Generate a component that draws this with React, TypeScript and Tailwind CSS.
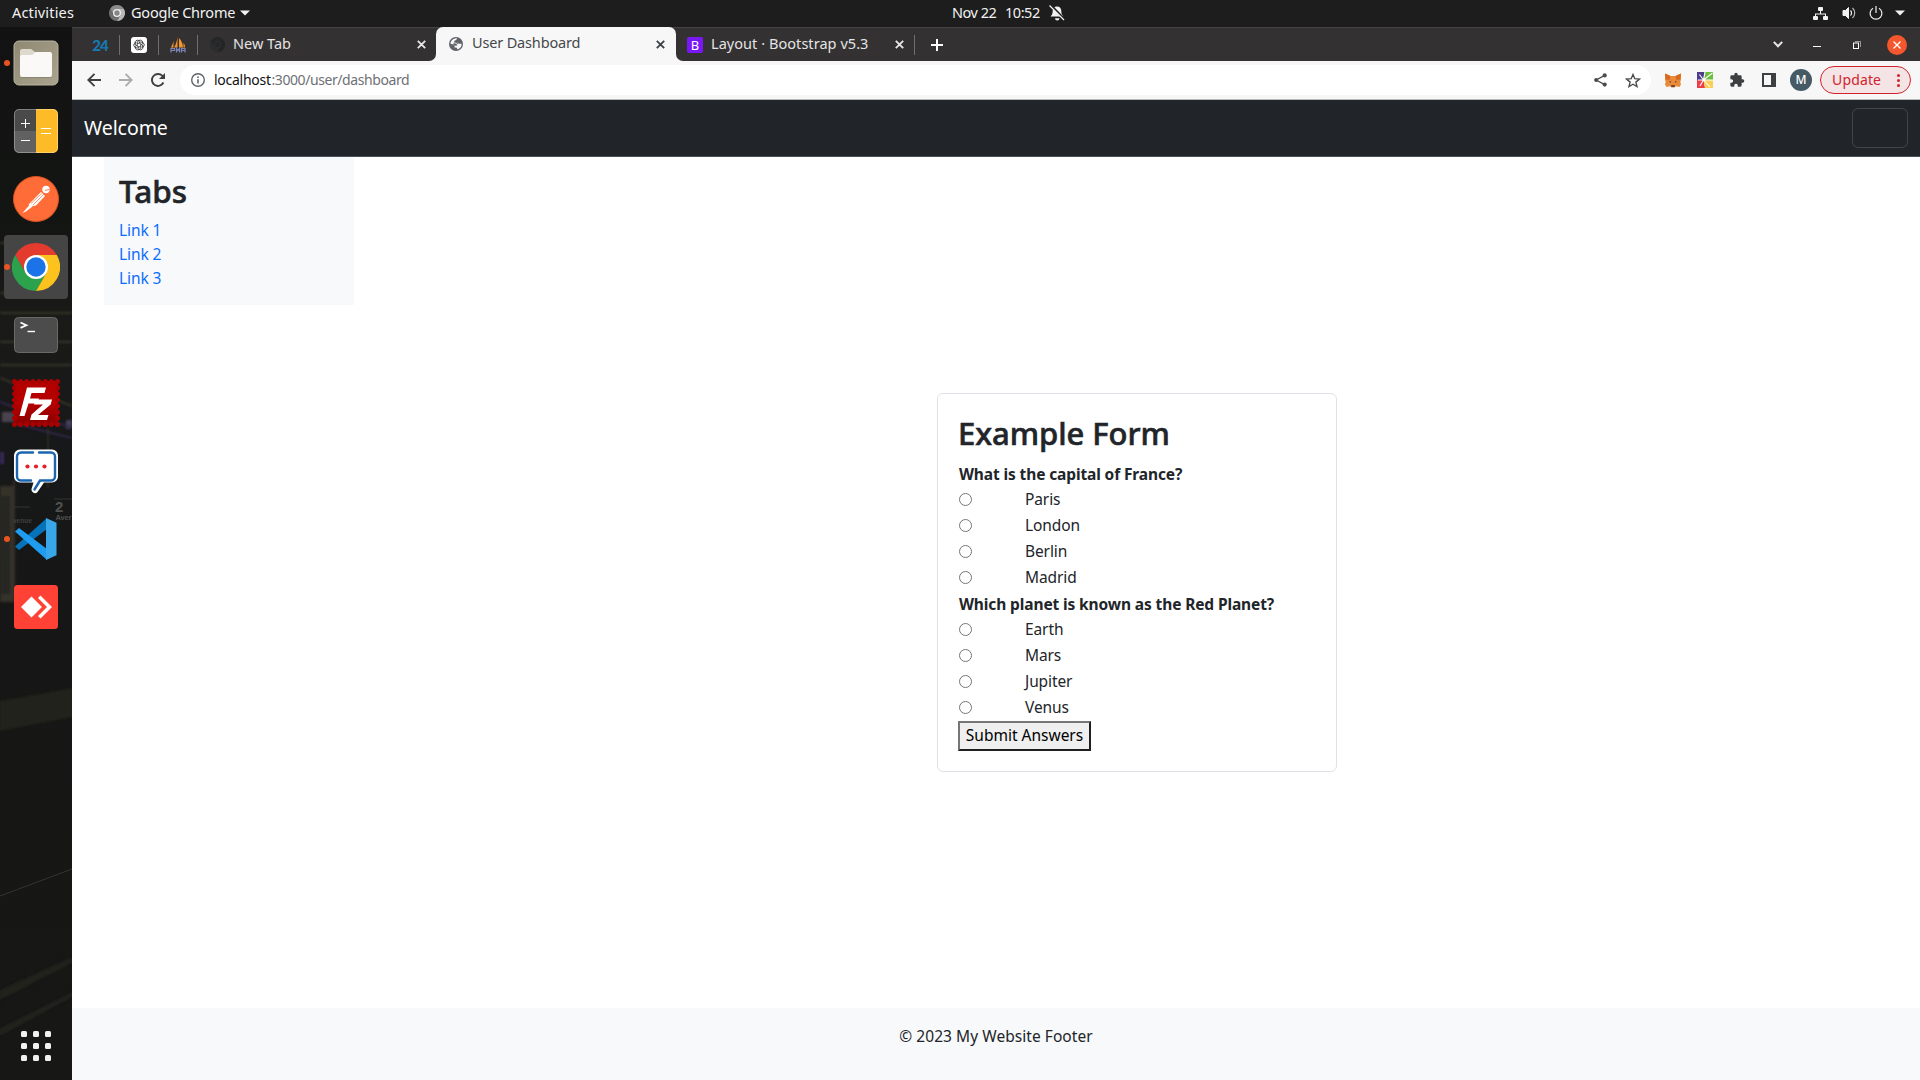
import type { ReactNode } from "react";

/* ---------- dock icons ---------- */

const FilesIcon = () => (
  <svg width="46" height="46" viewBox="0 0 46 46">
    <defs>
      <linearGradient id="files" x1="0" y1="0" x2="1" y2="1">
        <stop offset="0" stopColor="#8f8872" />
        <stop offset="1" stopColor="#aaa38d" />
      </linearGradient>
    </defs>
    <rect x="1" y="1" width="44" height="44" rx="5" fill="url(#files)" stroke="#b9b3a1" />
    <path d="M7 15V11a2 2 0 0 1 2-2h9l4 3h9v8H7z" fill="#ddd9cc" />
    <path d="M7 17a2 2 0 0 1 2-2h10l4-3h14a2 2 0 0 1 2 2v21a2 2 0 0 1-2 2H9a2 2 0 0 1-2-2z" fill="#faf9f7" />
    <path d="M8 37.5h30" stroke="#7d7765" strokeOpacity=".6" />
  </svg>
);

const CalculatorIcon = () => (
  <svg width="46" height="46" viewBox="0 0 46 46">
    <defs>
      <clipPath id="calc">
        <rect x="1" y="1" width="44" height="44" rx="5" />
      </clipPath>
    </defs>
    <g clipPath="url(#calc)">
      <rect width="23" height="23" fill="#4a4a4a" />
      <rect y="23" width="23" height="23" fill="#616161" />
      <rect x="23" width="23" height="46" fill="#fdbc27" />
    </g>
    <rect x="1.5" y="1.5" width="43" height="43" rx="4.5" fill="none" stroke="#fff" strokeOpacity=".3" />
    <path d="M8 15.500h9M12.500 11v9M8 32.500h9M28 20.500h10M28 25.500h10" stroke="#fff" strokeWidth="1" />
  </svg>
);

const PostmanIcon = () => (
  <svg width="46" height="46" viewBox="0 0 46 46">
    <circle cx="23" cy="23" r="22.500" fill="#ff6c37" stroke="#d9531f" />
    <circle cx="33" cy="13.500" r="3.700" fill="#fff" />
    <path d="M32 14.500l4.500-1.200" stroke="#ff6c37" strokeWidth=".9" />
    <path d="M28 16l4 4-9 9.500-5.500 1-2-2z" fill="#fff" />
    <path d="M16.500 29l3 1.500-6.500 5-3.500 1.500z" fill="#fff" />
    <path d="M20 29l10.500-10.500M18 27.500l10.500-10" stroke="#ff6c37" strokeWidth=".7" />
  </svg>
);

const ChromeIcon = ({ size = 48, grey = false, dark = false }: { size?: number; grey?: boolean; dark?: boolean }) => {
  const c = dark
    ? ["#242628", "#2a2c2e", "#222426", "#343133", "#25282a"]
    : grey
      ? ["#8c8c8c", "#6f6f6f", "#b8b8b8", "#f0f0f0", "#858585"]
      : ["#e33b2e", "#2da24c", "#fcc31e", "#ffffff", "#1a73e8"];
  return (
    <svg width={size} height={size} viewBox="0 0 48 48">
      <path d="M24 12H44.800A24 24 0 0 0 3.215 12L13.600 30z" fill={c[0]} />
      <path d="M34.400 30L24 48A24 24 0 0 1 3.215 12L13.600 30z" fill={c[1]} />
      <path d="M24 12H44.785A24 24 0 0 1 24 48L34.400 30z" fill={c[2]} />
      <circle cx="24" cy="24" r="12" fill={c[3]} />
      <circle cx="24" cy="24" r={grey ? 8 : 9.7} fill={c[4]} />
    </svg>
  );
};

const TerminalIcon = () => (
  <svg width="46" height="38" viewBox="0 0 46 38">
    <rect x="1.500" y="1.500" width="43" height="35" rx="4" fill="#4c4c4c" stroke="#6a6a6a" />
    <path d="M7.500 6.500l6 2.700-6 2.700" fill="none" stroke="#fff" strokeWidth="1.700" />
    <path d="M14.500 15.500h7.500" stroke="#fff" strokeWidth="1.400" />
  </svg>
);

const FilezillaIcon = () => (
  <svg width="48" height="48" viewBox="0 0 48 48">
    <defs>
      <linearGradient id="fz" x1="0" y1="0" x2="0" y2="1">
        <stop offset="0" stopColor="#b30000" />
        <stop offset=".5" stopColor="#b80000" />
        <stop offset="1" stopColor="#880000" />
      </linearGradient>
    </defs>
    <rect x="2" y="2" width="44" height="44" fill="url(#fz)" />
    <rect x="2.500" y="2.500" width="43" height="43" fill="none" stroke="#ac0000" strokeWidth="5" strokeLinecap="round" strokeDasharray="0 6.143" />
    <path d="M15 8.500h19l-1.500 5.500H19.500l-1.500 5.500h9l-1.300 5H16.500L12.500 37H7.500z" fill="#fff" />
    <path d="M23.500 20.500H40l-1.300 5L26 36h10.500l-1.500 5H18l1.500-5.500L31 25.500h-9z" fill="#fff" />
  </svg>
);

const ChatIcon = () => (
  <svg width="48" height="48" viewBox="0 0 48 48">
    <path
      d="M8 2.500h32a6 6 0 0 1 6 6v21a6 6 0 0 1-6 6h-8l-6.500 9.500a3.500 3.500 0 0 1-6-3l2-6.500H8a6 6 0 0 1-6-6v-21a6 6 0 0 1 6-6z"
      fill="#fff"
    />
    <path
      d="M21 5.500H9a4 4 0 0 0-4 4v20a4 4 0 0 0 4 4h10M27 5.500h12a4 4 0 0 1 4 4v20a4 4 0 0 1-4 4H28l-5.500 9"
      fill="none"
      stroke="#1c66b0"
      strokeWidth="2.400"
      strokeLinecap="round"
    />
    <g fill="#e5202b">
      <circle cx="15.500" cy="19.500" r="2.100" />
      <circle cx="24" cy="19.500" r="2.100" />
      <circle cx="32.500" cy="19.500" r="2.100" />
    </g>
  </svg>
);

const CodeIcon = () => (
  <svg width="44" height="44" viewBox="0 0 44 44">
    <path d="M1 29.500l4 3.600L33 12V1z" fill="#0673b8" />
    <path d="M1 14.500l4-3.600L33 32v11z" fill="#1f9cf0" />
    <path d="M32 1l10.500 4.800v32.400L32 43z" fill="#3aa6ea" />
  </svg>
);

const AnydeskIcon = () => (
  <svg width="44" height="44" viewBox="0 0 44 44">
    <rect width="44" height="44" rx="3.500" fill="#ff4136" />
    <path d="M17.500 11.500L28 22 17.500 32.500 7 22z" fill="#fff" />
    <path d="M24 13l2.500-2.500L38 22 26.500 33.500 24 31l9-9z" fill="#fff" />
  </svg>
);

const DockBackdrop = () => (
  <svg className="absolute inset-0" width="72" height="1053" viewBox="0 27 72 1053">
    <defs>
      <linearGradient id="dock" x1="0" y1="0" x2="0" y2="1">
        <stop offset="0" stopColor="#121212" />
        <stop offset=".18" stopColor="#131513" />
        <stop offset=".28" stopColor="#1a1a18" />
        <stop offset=".4" stopColor="#171819" />
        <stop offset=".56" stopColor="#161616" />
        <stop offset="1" stopColor="#171815" />
      </linearGradient>
      <filter id="soft">
        <feGaussianBlur stdDeviation="1.200" />
      </filter>
    </defs>
    <rect y="27" width="72" height="1053" fill="url(#dock)" />
    <g filter="url(#soft)">
      <path d="M0 243h30M0 293h32M0 313h72M0 342h72M0 365h72M0 378l72 28" stroke="#333225" strokeWidth="2" fill="none" />
      <rect x="2" y="412" width="14" height="10" fill="#48434f" />
      <rect x="66" y="420" width="6" height="9" fill="#45405a" />
      <path d="M0 402l72 26M16 424l56 14" stroke="#302849" strokeWidth="2" />
      <rect y="452" width="4" height="12" fill="#392c58" />
      <rect y="486" width="14" height="116" fill="#34322b" />
      <rect x="1" y="496" width="9" height="98" fill="#262624" />
      <path d="M14 480v120" stroke="#3b372c" strokeWidth="1.500" />
      <path d="M48 428v60" stroke="#33302a" strokeWidth="1.500" />
      <path d="M0 701l40-7 32-6v29L0 731z" fill="#24201a" />
      <path d="M0 990l72-33v6L0 1000zM0 1028l72-36v5L0 1036z" fill="#22231d" />
    </g>
    <path d="M0 896l72-27" stroke="#3b3b38" strokeWidth=".8" />
    <path d="M54 499h18M14 507h16" stroke="#3a3a3a" strokeWidth=".8" />
    <g fill="#505050" fontFamily="Liberation Sans, sans-serif" fontWeight="700">
      <text x="55" y="512" fontSize="15">2</text>
      <text x="55.500" y="520" fontSize="7.500" textLength="16">Aver</text>
      <text x="13" y="523" fontSize="6.500" fill="#404040">venue</text>
    </g>
  </svg>
);

const dockItems: { id: string; icon: ReactNode; running?: boolean; active?: boolean }[] = [
  { id: "files", icon: <FilesIcon />, running: true },
  { id: "calculator", icon: <CalculatorIcon /> },
  { id: "postman", icon: <PostmanIcon /> },
  { id: "chrome", icon: <ChromeIcon />, running: true, active: true },
  { id: "terminal", icon: <TerminalIcon /> },
  { id: "filezilla", icon: <FilezillaIcon /> },
  { id: "chat", icon: <ChatIcon /> },
  { id: "code", icon: <CodeIcon />, running: true },
  { id: "anydesk", icon: <AnydeskIcon /> },
];

function Dock() {
  return (
    <aside className="relative flex w-[72px] shrink-0 flex-col overflow-hidden bg-[#151515]">
      <DockBackdrop />
      <div className="relative flex flex-col pt-[2px]">
        {dockItems.map((item) => (
          <div key={item.id} className="relative flex h-[68px] items-center justify-center">
            <div
              className={
                item.active
                  ? "flex size-16 items-center justify-center rounded-[4px] bg-[#454545]"
                  : "flex size-16 items-center justify-center"
              }
            >
              {item.icon}
            </div>
            {item.running && <span className="absolute left-1 size-[6px] rounded-full bg-[#e95420]" />}
          </div>
        ))}
      </div>
      <div className="relative mx-auto mt-auto mb-[19px] grid grid-cols-3 gap-[6px]">
        {Array.from({ length: 9 }, (_, i) => (
          <span key={i} className="size-[6px] rounded-[1.5px] bg-[#f2f1ef]" />
        ))}
      </div>
    </aside>
  );
}

/* ---------- system bar ---------- */

const Caret = () => (
  <svg width="10" height="6" viewBox="0 0 10 6">
    <path d="M0 .5h10L5 5.500z" fill="#f2f2f2" />
  </svg>
);

function SystemBar() {
  return (
    <header className="flex h-[27px] shrink-0 items-center bg-[#1d1d1d] pb-px text-[#f2f2f2]">
      <div className="flex w-[952px] items-center pl-3 text-[14.5px]">
        <span className="w-[97px] tracking-[0.16px]">Activities</span>
        <ChromeIcon size={16} grey />
        <span className="ml-[6px] w-[105px] whitespace-nowrap tracking-[-0.22px]">Google Chrome</span>
        <span className="ml-[4px]">
          <Caret />
        </span>
      </div>
      <span className="w-[53px] whitespace-nowrap text-[14.5px] tracking-[-0.5px]">Nov 22</span>
      <span className="w-[44px] whitespace-nowrap text-[14.5px] tracking-[-0.45px]">10:52</span>
      <svg width="16" height="16" viewBox="0 0 16 16">
        <path d="M8 1.500c2.800 0 4.300 2 4.300 4.600 0 3 1 4.400 2.200 5.400H1.500c1.200-1 2.200-2.400 2.200-5.400C3.700 3.500 5.200 1.500 8 1.500z" fill="#f2f2f2" />
        <path d="M6 13.200h4.500a2.200 2.200 0 0 1-4.500 0z" fill="#f2f2f2" />
        <path d="M1.500 0L16 15" stroke="#1d1d1d" strokeWidth="2.500" />
        <path d="M.5.500L15 15" stroke="#f2f2f2" strokeWidth="1.300" />
      </svg>
      <div className="ml-auto flex items-center pr-[15px]">
        <svg width="15" height="13" viewBox="0 0 15 13" fill="#f2f2f2">
          <rect x="5" width="5" height="4" rx="1" />
          <rect y="9" width="5" height="4" rx="1" />
          <rect x="10" y="9" width="5" height="4" rx="1" />
          <path d="M7 4h1v2.500h5V9h-1V7.500H3V9H2V6.500h5z" />
        </svg>
        <svg className="ml-[14px]" width="16" height="14" viewBox="0 0 16 14" fill="none" stroke="#f2f2f2">
          <path d="M1 4.500h2.500L6.500 1.500v11l-3-3H1z" fill="#f2f2f2" />
          <path d="M8.500 4.500a3.500 3.500 0 0 1 0 5" strokeWidth="1.200" />
          <path d="M10.500 2a6.800 6.800 0 0 1 0 10" strokeWidth="1.200" strokeOpacity=".75" />
        </svg>
        <svg className="ml-[11px]" width="14" height="14" viewBox="0 0 14 14" fill="none" stroke="#f2f2f2" strokeWidth="1.200">
          <path d="M4 2.200a5.900 5.900 0 1 0 6 0M7 0v7" />
        </svg>
        <span className="ml-3">
          <Caret />
        </span>
      </div>
    </header>
  );
}

/* ---------- browser chrome ---------- */

const CloseX = ({ className }: { className: string }) => (
  <svg className={className} width="9" height="9" viewBox="0 0 9 9">
    <path d="M.8.8l7.400 7.400M8.200.8L.8 8.200" stroke="currentColor" strokeWidth="1.800" />
  </svg>
);

const TabRule = () => <span className="h-5 w-px shrink-0 bg-[#6f6d6e]" />;

const OpenAiIcon = () => (
  <svg width="16" height="16" viewBox="0 0 16 16">
    <rect width="16" height="16" rx="3" fill="#fff" />
    <g fill="none" stroke="#222" strokeWidth=".75">
      {[0, 60, 120, 180, 240, 300].map((a) => (
        <path key={a} d="M6.200 9V4.800L8 3.500a2.400 2.400 0 0 1 3.700 1.800V7" transform={`rotate(${a} 8 8)`} />
      ))}
    </g>
  </svg>
);

const SailIcon = () => (
  <svg width="16" height="16" viewBox="0 0 16 16">
    <path d="M7.500 0v10.500H4.200C6 7 7 4 7.500 0zM9 1c2.500 2.500 4 6 4 9.500H9zM3.500 3.500v7H.8C2.300 8 3.200 6 3.500 3.500zM13.500 5.500c1 1.500 1.500 3 1.500 5h-1.500z" fill="#f5952a" />
    <path d="M1 15.500V11.500h3.500v2H1M6.500 15.500v-4l1.500 2 1.500-2v4M11.500 15.500v-4H15v4M11.500 13.500H15" fill="none" stroke="#7d86b8" strokeWidth="1.200" />
  </svg>
);

const GlobeIcon = () => (
  <svg width="14" height="14" viewBox="0 0 14 14">
    <circle cx="7" cy="7" r="7" fill="#5f6368" />
    <path
      d="M8 1.300c-.3 1.200-.6 1.900-1.800 2.100-1 .2-1 .9-1.100 1.600h3l1.200 1.600c1 .1 1.600.3 3.300.2A5.600 5.600 0 0 1 8.500 12.400c-.5-1-.2-1.600-1.400-2H5.600V8.800L4.200 7.500 1.500 6.700C1.700 3.500 4.500 1.300 8 1.300z"
      fill="#f7f7f7"
    />
    <path d="M5.100 5h3l.9 1.600-.9 1.900-2.500.2-1.400-1.200z" fill="#5f6368" />
    <path d="M5.200 5.800c1.600.3 3 .5 3.400 2.200" fill="none" stroke="#f7f7f7" strokeWidth=".9" />
  </svg>
);

function TabStrip() {
  return (
    <div className="flex h-[34px] shrink-0 items-center border-t border-[#454344] bg-[#343132] text-[14.5px] text-[#e4e4e4]">
      <span className="flex w-[47px] justify-center pr-[-1px] pl-[9px] font-['Lato',sans-serif] text-[15px] leading-[20px] font-black tracking-[-1px] text-[#1479b3]">
        24
      </span>
      <TabRule />
      <span className="mx-[11px]">
        <OpenAiIcon />
      </span>
      <TabRule />
      <span className="mx-[11px]">
        <SailIcon />
      </span>
      <TabRule />
      <span className="ml-3">
        <ChromeIcon size={15} dark />
      </span>
      <span className="ml-2 w-[184px] pb-[2px]">New Tab</span>
      <CloseX className="text-[#e8e8e8]" />
      <div className="relative ml-[10px] flex h-[34px] w-[240px] shrink-0 items-center self-end rounded-t-[7px] bg-[#f7f7f7] text-[#45474a]">
        <svg className="absolute bottom-0 -left-[7px]" width="7" height="7" viewBox="0 0 7 7">
          <path d="M7 0v7H0a7 7 0 0 0 7-7z" fill="#f7f7f7" />
        </svg>
        <svg className="absolute -right-[7px] bottom-0" width="7" height="7" viewBox="0 0 7 7">
          <path d="M0 0v7h7a7 7 0 0 1-7-7z" fill="#f7f7f7" />
        </svg>
        <span className="ml-[13px]">
          <GlobeIcon />
        </span>
        <span className="ml-[9px] w-[184px] pb-[2px] whitespace-nowrap tracking-[-0.16px]">User Dashboard</span>
        <CloseX className="text-[#3c4043]" />
      </div>
      <span className="ml-[11px] flex size-4 items-center justify-center rounded-[2px] bg-[#7a18f5] text-[13px] leading-4 text-white">B</span>
      <span className="ml-2 w-[184px] pb-[2px] whitespace-nowrap tracking-[0.05px]">Layout · Bootstrap v5.3</span>
      <CloseX className="text-[#e8e8e8]" />
      <span className="ml-[10px] h-5 w-px bg-[#6f6d6e]" />
      <svg className="ml-4" width="12" height="12" viewBox="0 0 12 12">
        <path d="M6 0v12M0 6h12" stroke="#fff" strokeWidth="2" />
      </svg>
      <svg className="ml-auto" width="10" height="7" viewBox="0 0 10 7">
        <path d="M.8.900L5 5.200 9.200.900" fill="none" stroke="#e8e8e8" strokeWidth="2" />
      </svg>
      <span className="mt-[4px] ml-[30px] h-px w-2 bg-white" />
      <svg className="ml-8" width="8" height="8" viewBox="0 0 8 8">
        <rect x=".5" y="2" width="5" height="5.500" fill="none" stroke="#fff" />
        <path d="M2 .5h5.500V6" fill="none" stroke="#999" />
      </svg>
      <span className="mr-[13px] ml-[26px] flex size-5 items-center justify-center rounded-full bg-[#f4562e]">
        <svg width="8" height="8" viewBox="0 0 8 8">
          <path d="M.5.500l7 7M7.500.500l-7 7" stroke="#fff" strokeWidth="1.300" />
        </svg>
      </span>
    </div>
  );
}

const FoxIcon = () => (
  <svg width="16" height="15" viewBox="0 0 16 15">
    <path d="M0 .5L5.500 3h5L16 .5v6L15.300 9l.7 2.500-1.500 2.500-3.500-.8-1.500 1.300h-3L5 13.200 1.500 14 0 11.500.7 9 0 6.500z" fill="#e88a3a" />
    <path d="M0 .5L5.500 3 4.500 7 .8 6.500zM16 .5L10.500 3l1 4 3.700-.5z" fill="#d8691c" />
    <path d="M5.500 3h5L9.500 11h-3z" fill="#f0883a" />
    <path d="M4 8l2.300.8-.8.900zM12 8l-2.300.8.8.900zM6.300 12.200h3.400l.2 1.600H6.100z" fill="#3a3433" />
  </svg>
);

const PinwheelIcon = () => (
  <svg width="16" height="16" viewBox="0 0 16 16">
    <path d="M0 0h8L6.500 8H0z" fill="#4b3c8c" />
    <path d="M8 0h8v8H6.500z" fill="#6cbf3d" />
    <path d="M0 8h6.500L8 16H0z" fill="#ee3b47" />
    <path d="M6.500 8H16v8H8z" fill="#fbcf56" />
    <path d="M8 0L6.500 8l9-7M6.500 8H16M6.500 8L13 15M6.500 8L3 14M6.500 8H1M6.500 8L2.500 2.500" stroke="#fff" strokeWidth="1.100" fill="none" />
  </svg>
);

function Toolbar() {
  return (
    <div className="flex h-[39px] shrink-0 items-center border-b border-[#b6b8ba] bg-[#f7f7f7]">
      <svg className="ml-[15px]" width="14" height="14" viewBox="0 0 14 14" fill="none" stroke="#3d3f41" strokeWidth="1.900">
        <path d="M14 7H1.500M7.500.8L1.300 7l6.200 6.200" />
      </svg>
      <svg className="ml-[18px]" width="14" height="14" viewBox="0 0 14 14" fill="none" stroke="#a9abad" strokeWidth="1.900">
        <path d="M0 7h12.500M6.500.8L12.700 7l-6.200 6.200" />
      </svg>
      <svg className="ml-[18px]" width="14" height="14" viewBox="0 0 14 14">
        <path d="M12.400 9.500A6 6 0 1 1 11.200 2.700L12.800 4.400" fill="none" stroke="#3d3f41" strokeWidth="1.900" />
        <path d="M14 0v6H8z" fill="#3d3f41" />
      </svg>
      <div className="ml-[15px] flex h-[30px] flex-1 items-center rounded-full bg-white text-[14px]">
        <svg className="ml-[11px]" width="14" height="14" viewBox="0 0 14 14">
          <circle cx="7" cy="7" r="6.300" fill="none" stroke="#5f6368" strokeWidth="1.400" />
          <path d="M6.200 6.200h1.600v4.300H6.200zM6.200 3.400h1.600V5H6.200z" fill="#5f6368" />
        </svg>
        <span className="ml-[9px] w-[57.500px] pb-px whitespace-nowrap tracking-[-0.26px] text-[#111]">localhost</span>
        <span className="pb-px whitespace-nowrap tracking-[-0.42px] text-[#6e7175]">:3000/user/dashboard</span>
        <svg className="ml-auto" width="13" height="14" viewBox="0 0 13 14" fill="#4a4d50">
          <circle cx="10.700" cy="2.400" r="2.100" />
          <circle cx="2.200" cy="7" r="2.100" />
          <circle cx="10.700" cy="11.600" r="2.100" />
          <path d="M10.700 2.400L2.200 7l8.500 4.600" fill="none" stroke="#4a4d50" strokeWidth="1.300" />
        </svg>
        <svg className="mr-[10px] ml-[18px]" width="16" height="15" viewBox="0 0 16 15">
          <path d="M8 1.500l1.800 4.200 4.600.4-3.500 3 1.100 4.400L8 11.200l-4 2.300 1.100-4.400-3.500-3 4.600-.4z" fill="none" stroke="#4a4d50" strokeWidth="1.400" />
        </svg>
      </div>
      <div className="flex items-center pr-[9px] pl-[14px]">
        <FoxIcon />
        <span className="ml-4">
          <PinwheelIcon />
        </span>
        <svg className="ml-[16px]" width="16" height="16" viewBox="0 0 24 24" fill="#3d3f41">
          <path d="M20.500 11H19V7a2 2 0 0 0-2-2h-4V3.500a2.500 2.500 0 0 0-5 0V5H4a2 2 0 0 0-2 2v3.800h1.500a2.700 2.700 0 0 1 0 5.400H2V20a2 2 0 0 0 2 2h3.800v-1.500a2.700 2.700 0 0 1 5.400 0V22H17a2 2 0 0 0 2-2v-4h1.500a2.500 2.500 0 0 0 0-5z" />
        </svg>
        <svg className="ml-[17px]" width="14" height="14" viewBox="0 0 14 14">
          <path d="M0 0h14v14H0zM2 2v10h7V2z" fill="#3d3f41" fillRule="evenodd" />
        </svg>
        <span className="ml-[14px] flex size-[22px] items-center justify-center rounded-full bg-[#455a64] text-[12px] font-medium text-white">M</span>
        <div className="ml-2 flex h-7 w-[91px] items-center rounded-full border border-[#d2222b] bg-[#f5e4e5] pl-[11px] text-[14px] text-[#d2222b]">
          <span className="w-[65px] pb-px tracking-[0.15px]">Update</span>
          <span className="flex flex-col gap-[2px]">
            <i className="size-[3px] rounded-full bg-[#d2222b]" />
            <i className="size-[3px] rounded-full bg-[#d2222b]" />
            <i className="size-[3px] rounded-full bg-[#d2222b]" />
          </span>
        </div>
      </div>
    </div>
  );
}

/* ---------- page ---------- */

const questions = [
  { text: "What is the capital of France?", name: "capital", options: ["Paris", "London", "Berlin", "Madrid"] },
  { text: "Which planet is known as the Red Planet?", name: "planet", options: ["Earth", "Mars", "Jupiter", "Venus"] },
];

function ExampleForm() {
  return (
    <form className="h-[379px] w-[400px] rounded-[6px] border border-[#dee2e6] p-5">
      <h2 className="mb-2 h-[39px] text-[31px] leading-[38px] font-medium tracking-[-0.05px] whitespace-nowrap [-webkit-text-stroke:0.6px_#212529]">
        Example Form
      </h2>
      {questions.map((q) => (
        <div key={q.name}>
          <div className="h-[26px] pl-px text-[15.5px] leading-[27px] font-bold tracking-[-0.12px] whitespace-nowrap">{q.text}</div>
          {q.options.map((o) => (
            <label key={o} className="flex h-[26px] items-center pl-px">
              <span className="-mt-px size-[13px] rounded-full border border-[#767676] bg-white" />
              <span className="ml-[53px] text-[15.5px] tracking-[-0.1px]">{o}</span>
            </label>
          ))}
        </div>
      ))}
      <button
        type="button"
        className="flex h-[30px] w-[133px] items-center justify-center border-2 border-t-[#767676] border-r-[#1f1f1f] border-b-[#1f1f1f] border-l-[#767676] bg-[#efefef] text-[15.5px] whitespace-nowrap text-black"
      >
        Submit Answers
      </button>
    </form>
  );
}

function Page() {
  return (
    <div className="flex min-h-0 flex-1 flex-col bg-white text-[#212529]">
      <nav className="flex h-[57px] shrink-0 items-center justify-between border-b border-[#495057] bg-[#212529] pr-3 pl-3">
        <span className="text-[19.5px] tracking-[-0.05px] text-white">Welcome</span>
        <button type="button" aria-label="Toggle navigation" className="h-10 w-14 rounded-[6px] border border-[#424649]" />
      </nav>
      <main className="flex min-h-0 flex-1 flex-col">
        <section className="ml-8 h-[148px] w-[250px] bg-[#f8f9fa] px-[15px] pt-[15px]">
          <h2 className="mb-2 h-[38.4px] text-[31.5px] leading-[38px] font-medium [-webkit-text-stroke:0.6px_#212529]">Tabs</h2>
          <ul className="text-[15.5px] leading-6 tracking-[-0.1px] text-[#0d6efd]">
            <li>Link 1</li>
            <li>Link 2</li>
            <li>Link 3</li>
          </ul>
        </section>
        <div className="mt-[88px] ml-[865px]">
          <ExampleForm />
        </div>
      </main>
      <footer className="flex h-[72px] shrink-0 justify-center bg-[#f8f9fa] pt-4 text-[15.5px] leading-6 tracking-[0.05px]">© 2023 My Website Footer</footer>
    </div>
  );
}

export default function App() {
  return (
    <div className="flex h-screen w-full flex-col overflow-hidden font-['Noto_Sans',sans-serif]">
      <SystemBar />
      <div className="flex min-h-0 flex-1">
        <Dock />
        <div className="flex min-w-0 flex-1 flex-col">
          <TabStrip />
          <Toolbar />
          <Page />
        </div>
      </div>
    </div>
  );
}
